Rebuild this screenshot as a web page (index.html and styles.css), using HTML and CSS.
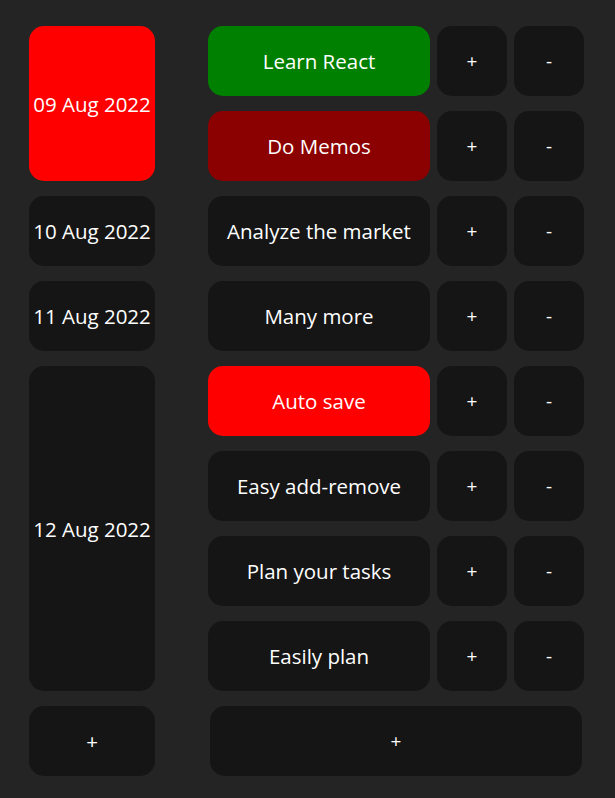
FILE: index.html
```html
<!DOCTYPE html>
<html>
<head>
<meta charset="utf-8">
<link rel="stylesheet" href="styles.css">
</head>
<body>
<div class="board">
  <div class="dates">
    <div class="cell date red span-2">09 Aug 2022</div>
    <div class="cell date">10 Aug 2022</div>
    <div class="cell date">11 Aug 2022</div>
    <div class="cell date span-4">12 Aug 2022</div>
    <div class="cell date">+</div>
  </div>
  <div class="tasks">
    <div class="cell task green">Learn React</div><div class="cell btn">+</div><div class="cell btn">-</div>
    <div class="cell task darkred">Do Memos</div><div class="cell btn">+</div><div class="cell btn">-</div>
    <div class="cell task">Analyze the market</div><div class="cell btn">+</div><div class="cell btn">-</div>
    <div class="cell task">Many more</div><div class="cell btn">+</div><div class="cell btn">-</div>
    <div class="cell task red">Auto save</div><div class="cell btn">+</div><div class="cell btn">-</div>
    <div class="cell task">Easy add-remove</div><div class="cell btn">+</div><div class="cell btn">-</div>
    <div class="cell task">Plan your tasks</div><div class="cell btn">+</div><div class="cell btn">-</div>
    <div class="cell task">Easily plan</div><div class="cell btn">+</div><div class="cell btn">-</div>
    <div class="cell add-task">+</div>
  </div>
</div>
</body>
</html>
```
FILE: styles.css
```css
html, body {
  margin: 0;
  padding: 0;
  background: #242424;
}
body {
  font-family: "Open Sans", "Noto Sans", sans-serif;
  font-size: 20.5px;
  font-weight: 400;
  color: #ffffff;
}
.board {
  display: flex;
  gap: 53px;
  padding: 26px 0 0 29px;
}
.dates {
  display: grid;
  grid-template-columns: 126px;
  grid-auto-rows: 70px;
  row-gap: 15px;
}
.tasks {
  display: grid;
  grid-template-columns: 222px 70px 70px;
  grid-auto-rows: 70px;
  column-gap: 7px;
  row-gap: 15px;
}
.cell {
  background: #151515;
  border-radius: 15px;
  display: flex;
  align-items: center;
  justify-content: center;
  white-space: nowrap;
}
.btn {
  font-size: 19px;
}
.span-2 { grid-row: span 2; }
.span-4 { grid-row: span 4; }
.add-task {
  grid-column: 1 / -1;
  margin: 0 2px;
  font-size: 19px;
}
.red { background: #ff0000; }
.green { background: #008000; }
.darkred { background: #8b0000; }
```
